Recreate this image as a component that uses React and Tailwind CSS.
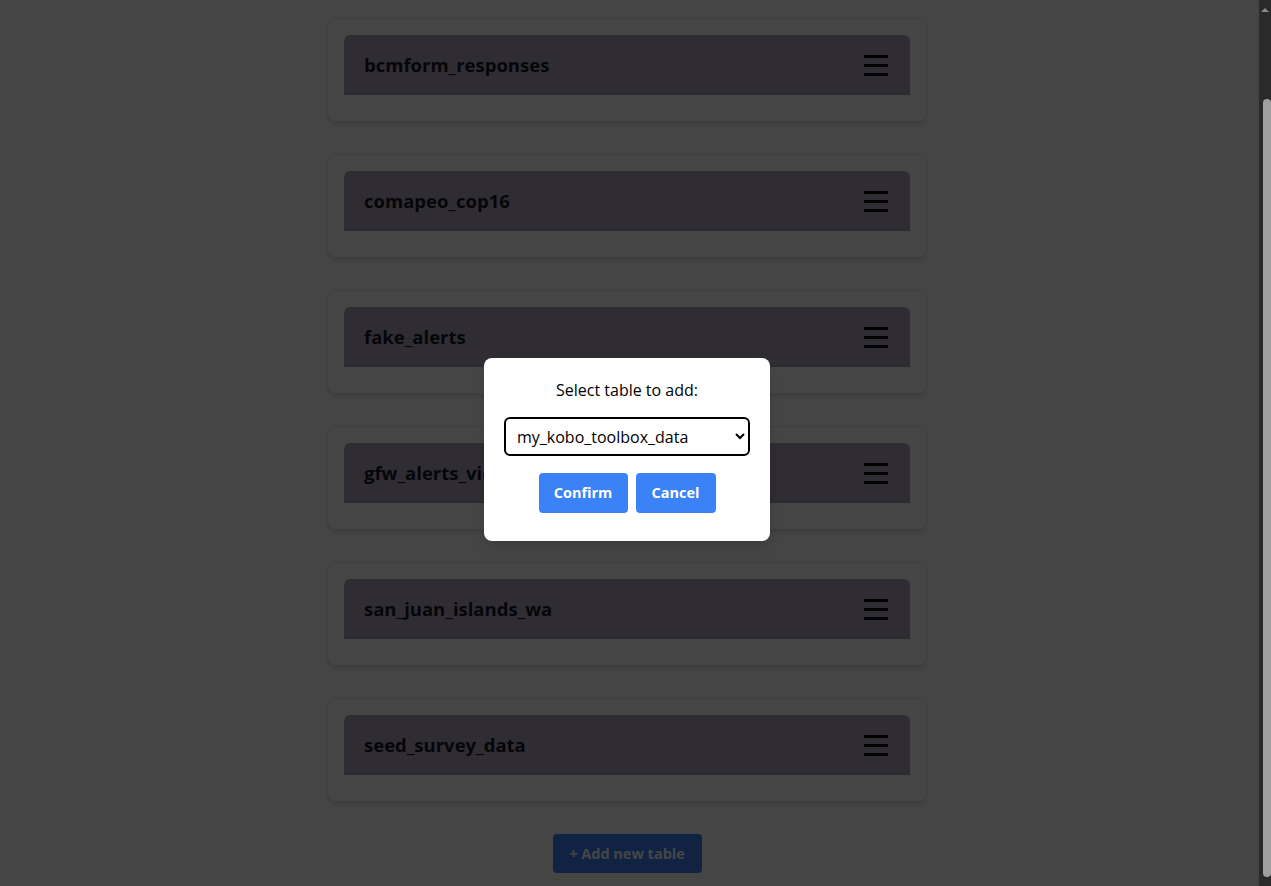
import React from 'react';

const tables = [
  'bcmform_responses',
  'comapeo_cop16',
  'fake_alerts',
  'gfw_alerts_view',
  'san_juan_islands_wa',
  'seed_survey_data',
];

const MenuIcon = () => (
  <svg width="24" height="24" viewBox="0 0 24 24" className="text-black">
    <rect x="0" y="2" width="24" height="3" fill="currentColor" />
    <rect x="0" y="11" width="24" height="3" fill="currentColor" />
    <rect x="0" y="20" width="24" height="3" fill="currentColor" />
  </svg>
);

const TableCard = ({ name }) => (
  <div className="w-[600px] rounded-lg border border-gray-200 bg-white px-4 pt-4 pb-[26px] shadow-md">
    <div className="flex h-[60px] items-center justify-between rounded-t-md border-b border-gray-400 bg-[#b3a3bf] pl-5 pr-[22px]">
      <h2 className="text-[18.5px] font-bold text-gray-900">{name}</h2>
      <MenuIcon />
    </div>
  </div>
);

// page scrollbar, as the browser shows it
const Scrollbar = () => (
  <div className="flex w-[12px] shrink-0 flex-col items-center bg-[#2a2a2a]">
    <div className="mt-[8px] h-0 w-0 border-x-[4px] border-b-[4px] border-x-transparent border-b-[#8a8a8a]" />
    <div className="mt-[87px] ml-[3px] h-[778px] w-[8px] rounded-full bg-[#a0a0a0]" />
  </div>
);

export default function App() {
  return (
    <div className="flex h-screen overflow-hidden bg-white font-['Open_Sans',sans-serif]">
      <div className="relative flex-1">
        <div className="flex flex-col items-center pt-[18px] pr-[5px]">
          <div className="flex flex-col gap-8">
            {tables.map((t) => (
              <TableCard key={t} name={t} />
            ))}
          </div>
          <button className="mt-8 h-[39px] w-[149px] rounded bg-[#3b82f6] text-[14.5px] font-bold text-white">
            + Add new table
          </button>
        </div>

        <div className="absolute inset-0 flex items-center justify-center bg-black/[0.73] pr-[5px]">
          <div className="mt-[13px] flex w-[286px] flex-col items-center rounded-lg bg-white px-5 pt-[20px] pb-[28px] shadow-lg">
            <p className="text-[16px] text-black">Select table to add:</p>
            <select
              defaultValue="my_kobo_toolbox_data"
              className="mt-[15px] h-[39px] w-[246px] rounded-md border-2 border-black bg-white pl-[7px] pr-1 text-[16px] text-black"
            >
              <option value="my_kobo_toolbox_data">my_kobo_toolbox_data</option>
            </select>
            <div className="mt-[17px] flex gap-2">
              <button className="h-[40px] w-[89px] rounded bg-[#3b82f6] text-[14.5px] font-bold text-white">
                Confirm
              </button>
              <button className="h-[40px] w-[80px] rounded bg-[#3b82f6] text-[14.5px] font-bold text-white">
                Cancel
              </button>
            </div>
          </div>
        </div>
      </div>
      <Scrollbar />
    </div>
  );
}
